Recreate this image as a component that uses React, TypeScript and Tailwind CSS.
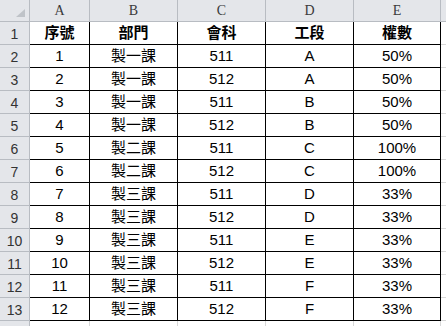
import React from "react";

const rows: [string, string, string, string, string][] = [
  ["1", "製一課", "511", "A", "50%"],
  ["2", "製一課", "512", "A", "50%"],
  ["3", "製一課", "511", "B", "50%"],
  ["4", "製一課", "512", "B", "50%"],
  ["5", "製二課", "511", "C", "100%"],
  ["6", "製二課", "512", "C", "100%"],
  ["7", "製三課", "511", "D", "33%"],
  ["8", "製三課", "512", "D", "33%"],
  ["9", "製三課", "511", "E", "33%"],
  ["10", "製三課", "512", "E", "33%"],
  ["11", "製三課", "511", "F", "33%"],
  ["12", "製三課", "512", "F", "33%"],
];

const headers = ["序號", "部門", "會科", "工段", "權數"];
const letters = ["A", "B", "C", "D", "E"];

const sans = { fontFamily: '"Liberation Sans", "Noto Sans CJK TC", sans-serif' };

export default function App() {
  return (
    <div className="w-[446px] h-[326px] overflow-hidden bg-white">
      <div className="grid grid-cols-[30px_60px_88px_88px_88px_87px_60px] grid-rows-[22px_repeat(14,23px)]">
        {/* corner */}
        <div className="relative bg-[#e4e6ea] border-r border-b border-[#b8bcc2]">
          <div className="absolute right-[4px] bottom-[4px] w-0 h-0 border-l-[9px] border-l-transparent border-b-[8px] border-b-[#bfc3c8]" />
        </div>
        {letters.map((l) => (
          <div
            key={l}
            className="bg-[#e4e6ea] border-r border-b border-[#b8bcc2] flex items-center justify-center text-[14px] text-[#3a3a3a]"
            style={{ fontFamily: '"Liberation Serif", serif' }}
          >
            {l}
          </div>
        ))}
        <div className="bg-[#e4e6ea] border-r border-b border-[#b8bcc2]" />

        {/* row 1 header */}
        <div className="bg-[#e4e6ea] border-r border-b border-[#b8bcc2] flex items-center justify-center pt-[3px] text-[14px] text-[#333]" style={sans}>
          1
        </div>
        {headers.map((h) => (
          <div
            key={h}
            className="border-r border-b border-black flex items-center justify-center font-bold text-[15px] text-black"
            style={sans}
          >
            {h}
          </div>
        ))}
        <div className="border-r border-b border-[#d8d8d8]" />

        {rows.map((r, i) => (
          <React.Fragment key={i}>
            <div className="bg-[#e4e6ea] border-r border-b border-[#b8bcc2] flex items-center justify-center pt-[3px] text-[14px] text-[#333]" style={sans}>
              {i + 2}
            </div>
            {r.map((c, j) => (
              <div
                key={j}
                className="border-r border-b border-black flex items-center justify-center text-[15px] text-black"
                style={sans}
              >
                {c}
              </div>
            ))}
            <div className="border-r border-b border-[#d8d8d8]" />
          </React.Fragment>
        ))}

        {/* row 14 partial */}
        <div className="bg-[#e4e6ea] border-r border-[#b8bcc2]" />
        {[0, 1, 2, 3, 4, 5].map((k) => (
          <div key={k} className="border-r border-[#d8d8d8]" />
        ))}
      </div>
    </div>
  );
}
